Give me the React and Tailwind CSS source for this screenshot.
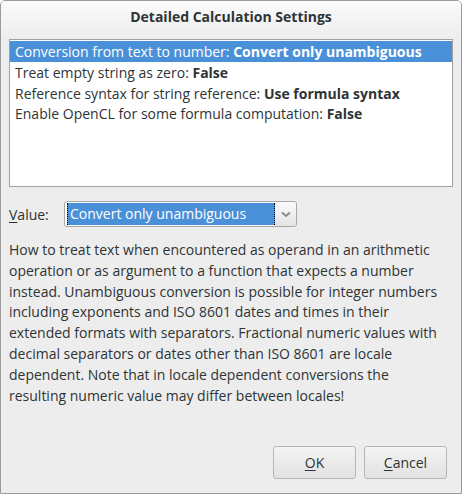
import React from 'react';

const rows = [
  { label: 'Conversion from text to number: ', value: 'Convert only unambiguous' },
  { label: 'Treat empty string as zero: ', value: 'False' },
  { label: 'Reference syntax for string reference: ', value: 'Use formula syntax' },
  { label: 'Enable OpenCL for some formula computation: ', value: 'False' },
];

const App = () => {
  return (
    <div
      className="w-[462px] h-[495px] bg-white text-[#2e3436]"
      style={{ fontFamily: '"Open Sans", "DejaVu Sans", sans-serif' }}
    >
      <div className="w-[462px] h-[494px] flex flex-col border border-[#9b9b9b] rounded-t-[5px] bg-[#ededed] overflow-hidden">
        {/* title bar */}
        <div className="h-[38px] shrink-0 flex justify-center pt-[5px] bg-gradient-to-b from-[#fbfbfb] to-[#ededed]">
          <span className="text-[14px] font-bold">Detailed Calculation Settings</span>
        </div>

        <div className="flex-1 flex flex-col px-[8px]">
          {/* options list */}
          <div className="h-[148px] border border-[#a1a1a1] bg-white pt-[1px]">
            {rows.map((r, i) => (
              <div
                key={i}
                className={
                  'h-[20.5px] pl-[5px] text-[14px] leading-[22px] whitespace-nowrap ' +
                  (i === 0 ? 'bg-[#4a90d9] text-white h-[21px]' : '')
                }
              >
                {r.label}
                <span className="font-bold">{r.value}</span>
              </div>
            ))}
          </div>

          {/* value combo */}
          <div className="flex items-center mt-[14px] h-[26px]">
            <span className="w-[55px] text-[14px]">
              <span className="underline underline-offset-2">V</span>alue:
            </span>
            <div className="flex h-[26px] w-[233px] border border-[#a7a7a7] rounded-[3px] bg-white">
              <div className="flex-1 ml-[2px] my-[1px] bg-[#4a90d9] border-x border-dotted border-black text-white text-[14px] leading-[22px] pl-[2px]">
                Convert only unambiguous
              </div>
              <div className="w-[21px] flex items-center justify-center bg-gradient-to-b from-[#fafafa] to-[#e4e4e4] rounded-r-[3px]">
                <svg width="10" height="7" viewBox="0 0 10 7">
                  <path d="M1 1.5 L5 5 L9 1.5" fill="none" stroke="#8a8a8a" strokeWidth="2" />
                </svg>
              </div>
            </div>
          </div>

          {/* description */}
          <p className="mt-[13px] text-[14px] leading-[20.8px] pr-[6px]">
            How to treat text when encountered as operand in an arithmetic operation or as argument to a function
            that expects a number instead. Unambiguous conversion is possible for integer numbers including
            exponents and ISO 8601 dates and times in their extended formats with separators. Fractional numeric
            values with decimal separators or dates other than ISO 8601 are locale dependent. Note that in locale
            dependent conversions the resulting numeric value may differ between locales!
          </p>

          <div className="flex-1" />

          {/* buttons */}
          <div className="flex justify-end gap-[8px] pr-[6px] pb-[14px]">
            <button className="w-[83px] h-[33px] border border-[#b6b6b3] rounded-[3px] bg-gradient-to-b from-[#f4f4f4] to-[#e2e2e2] text-[14px]">
              <span className="underline underline-offset-2">O</span>K
            </button>
            <button className="w-[83px] h-[33px] border border-[#b6b6b3] rounded-[3px] bg-gradient-to-b from-[#f4f4f4] to-[#e2e2e2] text-[14px]">
              <span className="underline underline-offset-2">C</span>ancel
            </button>
          </div>
        </div>
      </div>
    </div>
  );
};

export default App;
